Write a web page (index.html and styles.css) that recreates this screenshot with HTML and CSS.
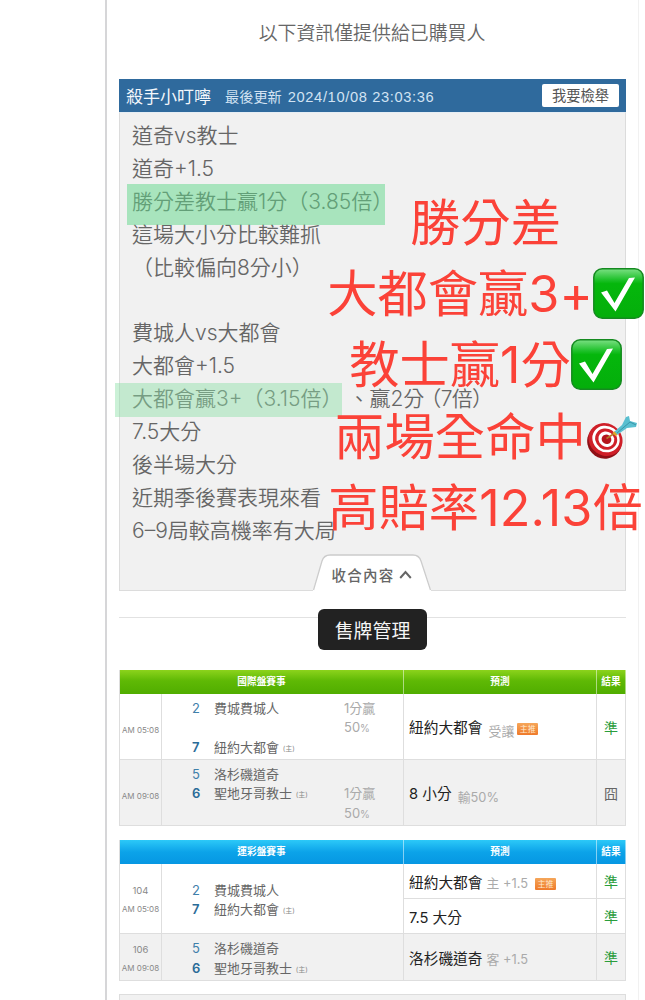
FILE: index.html
```html
<!DOCTYPE html>
<html lang="zh-Hant">
<head>
    <meta charset="UTF-8">
    <meta name="viewport" content="width=device-width, initial-scale=1.0">
    <title>售牌管理</title>
    <link rel="stylesheet" href="styles.css">
</head>

<body>

    <div class="page">
        <p class="notice">以下資訊僅提供給已購買人</p>

        <div class="panel">
            <div class="panel-head">
                <span class="name">殺手小叮嚀</span>
                <span class="updated">最後更新 <span class="date">2024/10/08 23:03:36</span></span>
                <button type="button" class="report">我要檢舉</button>
            </div>
            <div class="panel-body">
                <p>道奇vs教士</p>
                <p>道奇+1.5</p>
                <p>勝分差教士贏1分（3.85倍）</p>
                <p>這場大小分比較難抓</p>
                <p>（比較偏向8分小）</p>
                <p>&nbsp;</p>
                <p>費城人vs大都會</p>
                <p>大都會+1.5</p>
                <p>大都會贏3+（3.15倍） 、贏2分<span class="odds">（7倍）</span></p>
                <p>7.5大分</p>
                <p>後半場大分</p>
                <p>近期季後賽表現來看</p>
                <p>6–9局較高機率有大局</p>
                <div class="mark mark-one"></div>
                <div class="mark mark-two"></div>
                <div class="fold">
                    <svg class="fold-shape" viewBox="0 0 118 37">
                        <path d="M0 36 L9 7 Q11 1 17 1 H100 Q106 1 108 7 L118 36 V37 H0 Z" fill="#fff"/>
                        <path d="M.5 36 L9 7 Q11 1 17 1 H100 Q106 1 108 7 L117.500 36" fill="none" stroke="#ccc" stroke-width="1.3"/>
                    </svg>
                    <span class="fold-text">收合內容</span>
                    <svg class="fold-arrow" viewBox="0 0 13 9"><path d="M1.200 8 L6.500 2 L11.800 8" fill="none" stroke="#666" stroke-width="2"/></svg>
                </div>
            </div>
        </div>

        <div class="manage">
            <button type="button" class="manage-btn">售牌管理</button>
        </div>

        <table class="games green">
            <colgroup><col class="c-time"><col class="c-team"><col class="c-pick"><col class="c-result"></colgroup>
            <tr class="head"><th colspan="2">國際盤賽事</th><th>預測</th><th>結果</th></tr>
            <tr class="row-tall">
                <td class="time">AM 05:08</td>
                <td>
                    <div class="teams">
                        <b class="away">2</b><span>費城費城人</span><i>1分贏</i>
                        <b></b><span></span><i>50<small>%</small></i>
                        <b>7</b><span>紐約大都會 <em>(主)</em></span><i></i>
                    </div>
                </td>
                <td class="pick">紐約大都會 <span class="low">受讓</span><span class="badge">主推</span></td>
                <td class="hit">準</td>
            </tr>
            <tr class="row-tall alt">
                <td class="time">AM 09:08</td>
                <td>
                    <div class="teams">
                        <b class="away">5</b><span>洛杉磯道奇</span><i></i>
                        <b>6</b><span>聖地牙哥教士 <em>(主)</em></span><i>1分贏</i>
                        <b></b><span></span><i>50<small>%</small></i>
                    </div>
                </td>
                <td class="pick">8 小分 <span class="low">輸50%</span></td>
                <td class="miss">囧</td>
            </tr>
        </table>

        <table class="games blue">
            <colgroup><col class="c-time"><col class="c-team"><col class="c-pick"><col class="c-result"></colgroup>
            <tr class="head"><th colspan="2">運彩盤賽事</th><th>預測</th><th>結果</th></tr>
            <tr class="row-short">
                <td class="time" rowspan="2"><span class="no">104</span>AM 05:08</td>
                <td rowspan="2">
                    <div class="teams">
                        <b class="away">2</b><span>費城費城人</span><i></i>
                        <b>7</b><span>紐約大都會 <em>(主)</em></span><i></i>
                    </div>
                </td>
                <td class="pick">紐約大都會 <span class="side">主 +1.5</span><span class="badge">主推</span></td>
                <td class="hit">準</td>
            </tr>
            <tr class="row-short">
                <td class="pick">7.5 大分</td>
                <td class="hit">準</td>
            </tr>
            <tr class="row-mid alt">
                <td class="time"><span class="no">106</span>AM 09:08</td>
                <td>
                    <div class="teams">
                        <b class="away">5</b><span>洛杉磯道奇</span><i></i>
                        <b>6</b><span>聖地牙哥教士 <em>(主)</em></span><i></i>
                    </div>
                </td>
                <td class="pick">洛杉磯道奇 <span class="side">客 +1.5</span></td>
                <td class="hit">準</td>
            </tr>
        </table>

        <div class="next-box"></div>
    </div>

    <!-- red caption over the panel -->
    <div class="caption">
        <p>勝分差</p>
        <p>大都會贏<span class="num">3+</span><svg class="check" viewBox="0 0 51 51"><use href="#check"/></svg></p>
        <p>教士贏<span class="num">1</span>分<svg class="check" viewBox="0 0 51 51"><use href="#check"/></svg></p>
        <p>兩場全命中<svg class="target" viewBox="0 0 51 51">
            <ellipse cx="18.500" cy="30.500" rx="17.500" ry="17" fill="#8e1016" transform="rotate(35 18.500 30.500)"/>
            <ellipse cx="19.500" cy="28.500" rx="17.500" ry="16" fill="#cf1f28" transform="rotate(35 19.500 28.500)"/>
            <ellipse cx="20" cy="28" rx="14" ry="13" fill="#fff" transform="rotate(35 20 28)"/>
            <ellipse cx="20.200" cy="28" rx="11.300" ry="10.400" fill="#cf1f28" transform="rotate(35 20 28)"/>
            <ellipse cx="20.400" cy="28" rx="8.200" ry="7.500" fill="#fff" transform="rotate(35 20 28)"/>
            <ellipse cx="20.600" cy="28" rx="5" ry="4.600" fill="#b5151d" transform="rotate(35 20 28)"/>
            <path d="M20.500 27.500 L29 22" stroke="#b77a2b" stroke-width="1.500"/>
            <path d="M28 21 L36 14 L40 6 L43 5 L44 10 L51 12 L50 16 L41 17 L31 24 Z" fill="#59bfd0"/>
            <path d="M31 22 L44 11 L50 14" fill="none" stroke="#3a95a8" stroke-width="1"/>
            <path d="M27.500 21 L30.500 24.500" stroke="#e0a62f" stroke-width="2.500"/>
        </svg></p>
        <p>高賠率<span class="num">12.13</span>倍</p>
    </div>

    <svg class="defs">
        <defs>
            <linearGradient id="shine" x1="0" y1="0" x2="0" y2="1">
                <stop offset="0" stop-color="#7be084"/>
                <stop offset=".22" stop-color="#1fc12b"/>
                <stop offset=".3" stop-color="#05b70c"/>
                <stop offset="1" stop-color="#04ae0b"/>
            </linearGradient>
            <g id="check">
                <rect x=".8" y=".8" width="49.400" height="49.400" rx="8.500" fill="url(#shine)" stroke="#158a20" stroke-width="1.500"/>
                <path d="M8 24.500 L14 22.500 L21.500 35 L36 10 L42 9.500 L22.500 43.500 Z" fill="#fff"/>
            </g>
        </defs>
    </svg>

</body>
</html>
```
FILE: styles.css
```css
body {
    margin: 0;
    height: 1000px;
    overflow: hidden;
    position: relative;
    background: #fff;
    font-family: Inter, "Noto Sans CJK TC", sans-serif;
    color: #666;
    text-spacing-trim: space-all;
}

p {
    margin: 0;
}

button {
    font-family: inherit;
    border: none;
    padding: 0;
}

.page {
    box-sizing: border-box;
    height: 1000px;
    overflow: hidden;
    margin-left: 105px;
    width: 534px;
    padding: 0 11px 0 12px;
    border-left: 2px solid #d6d6d8;
    border-right: 1px solid #f1f1f1;
}

.notice {
    height: 79px;
    line-height: 67px;
    font-size: 18.900px;
    font-weight: 350;
    text-align: center;
    text-indent: -2px;
}

.panel {
    width: 507px;
}

.panel-head {
    height: 33px;
    display: flex;
    align-items: center;
    padding: 0 7px;
    background: #2f6a9d;
    color: #f3f7fb;
}

.panel-head .name {
    font-size: 17px;
}

.updated {
    margin-left: 14px;
    font-size: 14.200px;
    color: #d2e3f3;
}

.date {
    margin-left: 2px;
    font-family: "Liberation Sans", sans-serif;
    font-size: 14.700px;
    letter-spacing: .620px;
}

.report {
    width: 77px;
    height: 23px;
    margin-left: auto;
    border-radius: 2px;
    background: #fff;
    color: #555;
    font-size: 14.300px;
    line-height: 23px;
}

.panel-body {
    position: relative;
    box-sizing: border-box;
    height: 479px;
    padding: 7px 0 0 12px;
    border: 1px solid #dcdcdc;
    border-top-color: #e6eef5;
    background: #f1f1f1;
    font-size: 21px;
    font-weight: 350;
}

.panel-body p {
    height: 32.920px;
    line-height: 32.920px;
    white-space: nowrap;
}

.odds {
    margin-left: -4px;
    letter-spacing: -.700px;
}

.mark {
    position: absolute;
}

.mark-one {
    left: 7px;
    top: 71px;
    width: 258px;
    height: 41px;
    background: rgba(95, 215, 137, .5);
}

.mark-two {
    left: -5px;
    top: 270px;
    width: 227px;
    height: 34px;
    background: rgba(140, 224, 166, .45);
}

.fold {
    position: absolute;
    left: 193px;
    bottom: -1px;
    width: 118px;
    height: 37px;
    display: flex;
    align-items: center;
    justify-content: center;
    gap: 5px;
    padding-top: 4px;
    box-sizing: border-box;
}

.fold-shape {
    position: absolute;
    left: 0;
    top: 0;
    width: 118px;
    height: 37px;
}

.fold-text {
    position: relative;
    font-size: 14.500px;
    font-weight: 500;
    letter-spacing: 1.200px;
}

.fold-arrow {
    position: relative;
    width: 13px;
    height: 9px;
}

.manage {
    display: flex;
    justify-content: center;
    height: 60px;
    margin-top: 18px;
    background: linear-gradient(#e2e2e2, #e2e2e2) 0 8px / 100% 1px no-repeat;
    width: 507px;
}

.manage-btn {
    width: 109px;
    height: 41px;
    border-radius: 6px;
    background: #222;
    color: #f5f5f5;
    font-size: 18.900px;
}

.games {
    width: 507px;
    table-layout: fixed;
    border-spacing: 0;
    border-left: 1px solid #ddd;
    margin-bottom: 14px;
}

.manage + .games {
    margin-top: 1px;
}

.c-time {
    width: 42px;
}

.c-team {
    width: 242px;
}

.c-pick {
    width: 193px;
}

.c-result {
    width: 29px;
}

.games th,
.games td {
    box-sizing: border-box;
    padding: 0;
    border-right: 1px solid #dedede;
    border-bottom: 1px solid #dedede;
}

.games td {
    padding-top: 3px;
}

.games th {
    height: 24px;
    border-bottom: none;
    border-right-color: rgba(255, 255, 255, .5);
    color: #fff;
    font-size: 9.700px;
    line-height: 24px;
}

.green .head {
    background: linear-gradient(#8cd31c, #5fb905 45%, #50ad00);
}

.blue .head {
    background: linear-gradient(#2cc9f8, #0ca3e9 50%, #0697e3);
}

.row-tall {
    height: 66px;
}

.row-short {
    height: 35px;
}

.row-mid {
    height: 47px;
}

.alt {
    background: #f1f1f1;
}

.time {
    color: #888;
    font-size: 8px;
    line-height: 19px;
    text-align: center;
    white-space: nowrap;
}

.games .row-tall .time {
    padding-top: 7px;
}

.no {
    display: block;
    font-size: 9.500px;
}

.teams {
    display: grid;
    grid-template-columns: 22px 130px 50px;
    grid-auto-rows: 19.200px;
    margin-left: 30px;
    font-size: 13px;
    line-height: 19.200px;
    white-space: nowrap;
}

.teams b {
    color: #2a6c98;
    font-weight: 600;
}

.teams .away {
    font-weight: 400;
    color: #3f80aa;
}

.teams i {
    font-style: normal;
    color: #aaa;
}

.teams small {
    font-size: 10px;
}

.teams em {
    font-style: normal;
    font-size: 7px;
    color: #888;
    vertical-align: 1px;
}

.games .pick {
    padding-top: 4px;
    padding-left: 5px;
    color: #222;
    font-size: 14.700px;
    line-height: 22px;
    white-space: nowrap;
}

.low {
    position: relative;
    top: 3px;
    margin-left: 2px;
    font-size: 12.800px;
    color: #aaa;
}

.side {
    font-size: 12.800px;
    color: #aaa;
}

.badge {
    display: inline-block;
    width: 21px;
    height: 12px;
    margin-left: 5px;
    border-radius: 1px;
    background: linear-gradient(#f5a65a, #ef7a2a);
    color: #ffe9cf;
    font-size: 8px;
    line-height: 12px;
    text-align: center;
    vertical-align: 1px;
}

.low + .badge {
    margin-left: 3px;
}

.side + .badge {
    margin-left: 7px;
}

.hit,
.miss {
    font-size: 14px;
    text-align: center;
}

.games .hit,
.games .miss {
    padding-top: 0;
}

.hit {
    color: #2a9d3c;
}

.next-box {
    box-sizing: border-box;
    width: 507px;
    height: 40px;
    border: 1px solid #ddd;
    margin-top: -1px;
    background: #f1f1f1;
}

.caption {
    position: absolute;
    left: 327px;
    top: 187px;
    width: 317px;
    color: #fb4238;
    font-size: 50.300px;
    text-align: center;
}

.caption p {
    display: flex;
    justify-content: center;
    align-items: center;
    height: 71.200px;
    line-height: 71.200px;
    white-space: nowrap;
}

.caption .num {
    letter-spacing: .1px;
}

.check,
.target {
    width: 51px;
    height: 51px;
}

.defs {
    position: absolute;
    width: 0;
    height: 0;
}
```
